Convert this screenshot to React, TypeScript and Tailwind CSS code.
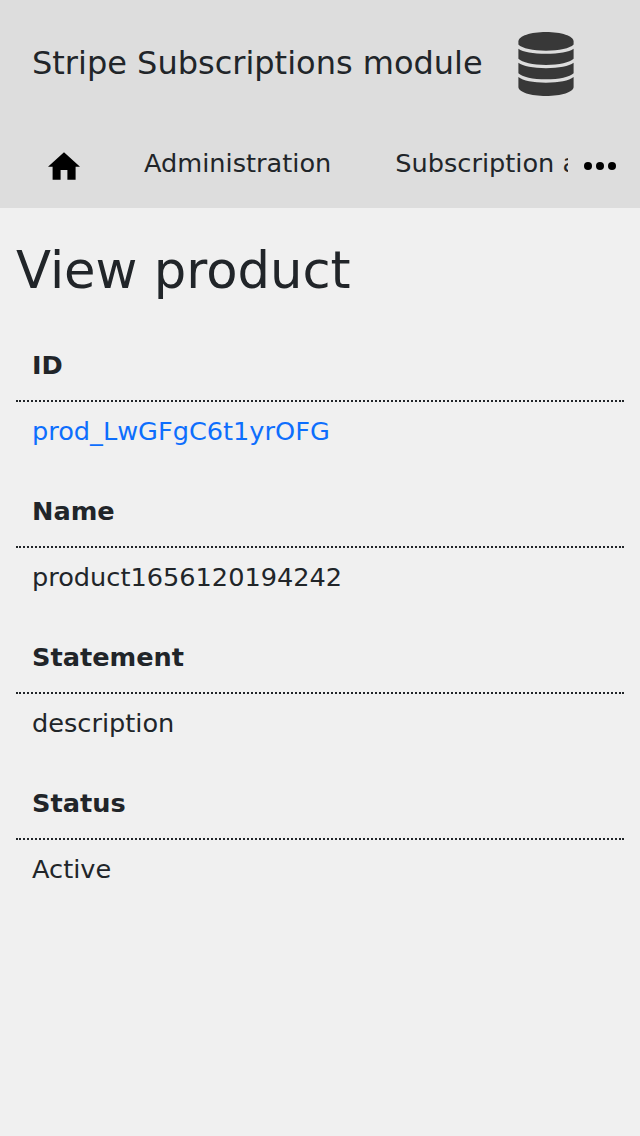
const fields = [
  { label: 'ID', value: 'prod_LwGFgC6t1yrOFG', link: true },
  { label: 'Name', value: 'product1656120194242' },
  { label: 'Statement', value: 'description' },
  { label: 'Status', value: 'Active' },
];

export default function App() {
  return (
    <div className="min-h-[1136px] w-full overflow-hidden bg-[#f0f0f0] font-['DejaVu_Sans',sans-serif] text-[25.6px] leading-[38px] text-[#212529]">
      <header className="h-[208px] bg-[#dddddd]">
        <div className="flex h-32 items-center pl-8">
          <h1 className="w-[486px] whitespace-nowrap pb-0.5 text-[32px] leading-[46px]">Stripe Subscriptions module</h1>
          <svg className="h-16 w-14" viewBox="0 0 56 64" fill="#383838">
            <path d="M.4 9.5C.4 4 12.8 0 28 0s27.6 4 27.6 9.5v3C52 16.400 41 18.700 28 18.700S4 16.400.4 12.500z" />
            <path d="M.4 16.700C5 20 15 21.700 28 21.700S51 20 55.600 16.700V26.800C52 30.500 41 33 28 33S4 30.500.4 26.800z" />
            <path d="M.4 30.800C5 34.300 15 36.200 28 36.200S51 34.300 55.600 30.800V41.200C52 45 41 47.300 28 47.300S4 45 .4 41.200z" />
            <path d="M.4 45.100C5 48.800 15 50.700 28 50.700S51 48.800 55.600 45.100V55C55.600 60 43.200 64 28 64S.4 60 .4 55z" />
          </svg>
        </div>
        <nav className="flex h-20 items-start">
          <svg className="ml-11 mt-[18px] size-10 shrink-0" viewBox="0 0 40 40">
            <path d="M20 6.200 4 20.700H8.600V33.700H16.600V24H23.400V33.700H31.600V20.700H36z" />
          </svg>
          <span className="ml-[60px] mt-4">Administration</span>
          <span className="ml-[64px] mt-4 w-[173px] overflow-hidden whitespace-nowrap">Subscription administration</span>
          <svg className="ml-3 mt-[18px] size-10 shrink-0" viewBox="0 0 40 40">
            <circle cx="8" cy="20" r="4" /><circle cx="20" cy="20" r="4" /><circle cx="32" cy="20" r="4" />
          </svg>
        </nav>
      </header>
      <main className="px-4 pt-8">
        <h2 className="text-[51.2px] leading-[61px]">View product</h2>
        <dl className="mt-[35px]">
          {fields.map((field) => (
            <div key={field.label} className="h-[146px]">
              <dt className="h-[66px] border-b-2 border-dotted border-[#212529] px-4 pt-[10px] font-bold">{field.label}</dt>
              <dd className="px-4 pt-[10px]">
                {field.link ? <a className="text-[#0d6efd]">{field.value}</a> : field.value}
              </dd>
            </div>
          ))}
        </dl>
      </main>
    </div>
  );
}
